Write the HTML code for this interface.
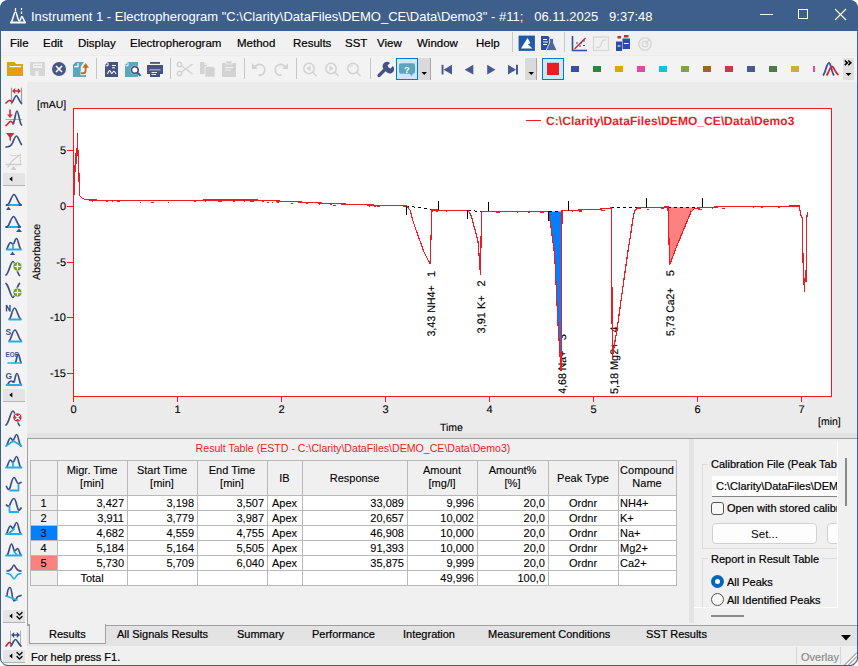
<!DOCTYPE html>
<html><head><meta charset="utf-8">
<style>
html,body{margin:0;padding:0;}
body{width:858px;height:666px;overflow:hidden;background:#ffffff;position:relative;font-family:"Liberation Sans",sans-serif;color:#000;}
.a{position:absolute;}
.menu span,.p12,.tab{-webkit-text-stroke:0.2px currentColor;}
.c{-webkit-text-stroke:0.1px currentColor;}
.win{position:absolute;left:0;top:0;width:858px;height:666px;border-radius:8px;background:#3e5f8c;overflow:hidden;}
.tt{position:absolute;left:31px;top:9px;font-size:13px;color:#fff;white-space:pre;line-height:16px;}
.menu{position:absolute;left:1px;top:31px;width:856px;height:24px;background:#f1f1f1;}
.menu span{position:absolute;top:5px;font-size:11.5px;line-height:14px;white-space:pre;}
.tb{position:absolute;left:1px;top:55px;width:856px;height:27px;background:#f3f3f3;border-top:1px solid #ececec;box-sizing:border-box;}
.sep{position:absolute;top:58px;width:1px;height:21px;background:#c8c8c8;}
.lt{position:absolute;left:1px;top:82px;width:26px;height:583px;background:#f3f3f3;}
.chart{position:absolute;left:27px;top:82px;width:830px;height:351px;background:#ebebeb;}
.split{position:absolute;left:27px;top:433px;width:830px;height:5px;background:#e3e3e3;}
.panel{position:absolute;left:27px;top:438px;width:830px;height:187px;background:#f0f0f0;border-top:1px solid #a0a0a0;box-sizing:border-box;border-left:1px solid #a0a0a0;}
.tabs{position:absolute;left:27px;top:625px;width:830px;height:21px;background:#e3e3e3;border-top:1px solid #a0a0a0;box-sizing:border-box;}
.status{position:absolute;left:27px;top:646px;width:830px;height:19px;background:#f0f0f0;}
.c{position:absolute;font-size:11px;line-height:13px;white-space:pre;}
.p12{font-size:11px;line-height:14px;white-space:pre;overflow:hidden;}
.tab{position:absolute;font-size:11px;line-height:14px;white-space:pre;}
</style></head><body>
<div class="win">
  <!-- title bar -->
  <svg class="a" style="left:9px;top:7px" width="18" height="18" viewBox="0 0 18 18">
    <g stroke="#fff" fill="none">
      <path d="M1,15.5 H17" stroke-width="1.8"/>
      <path d="M2.3,15 C4,13 5,5 6.5,5 C8,5 8.5,14 10.5,14 C11.5,14 12,9.5 13,9.5 C14,9.5 14.5,13.5 16,15" stroke-width="1.5"/>
      <path d="M6.5,1V4 M12.5,1V3 M12.5,4.5V7" stroke-width="1.3"/>
    </g>
  </svg>
  <div class="tt">Instrument 1 - Electropherogram "C:\Clarity\DataFiles\DEMO_CE\Data\Demo3" - #11;   06.11.2025   9:37:48</div>
  <div class="a" style="left:760px;top:14px;width:13px;height:1px;background:#fff"></div>
  <div class="a" style="left:798px;top:9px;width:8px;height:8px;border:1px solid #fff"></div>
  <svg class="a" style="left:834px;top:8px" width="13" height="13" viewBox="0 0 13 13"><path d="M1,1 L12,12 M12,1 L1,12" stroke="#fff" stroke-width="1.1"/></svg>

  <div class="menu">
    <span style="left:9px">File</span><span style="left:42px">Edit</span><span style="left:77px">Display</span><span style="left:129px">Electropherogram</span><span style="left:236px">Method</span><span style="left:292px">Results</span><span style="left:344px">SST</span><span style="left:376px">View</span><span style="left:416px">Window</span><span style="left:475px">Help</span>
    <svg class="a" style="left:-1px;top:-31px" width="858" height="54" viewBox="0 0 858 54">
      <rect x="512" y="32" width="1" height="20" fill="#c8c8c8"/>
      <rect x="518.6" y="35.6" width="16.3" height="15.3" fill="#1f5aa8"/>
      <path d="M521,48.5L527.5,38L530.5,43L528,44.5L532.5,48.5Z" fill="#fff"/>
      <path d="M541,36H548L551,39V50H541Z" fill="#2a4fa0"/>
      <path d="M543,39.5H547M543,42H548M543,44.5H547" stroke="#fff" stroke-width="1"/>
      <path d="M549.5,38.5H553.5V43L557,50.5H546L549.5,43Z" fill="#4d6b8a" stroke="#f0f0f0" stroke-width="0.8"/>
      <rect x="564" y="32" width="1" height="20" fill="#c8c8c8"/>
      <path d="M572.5,36V50.5H587" stroke="#2a4fa0" stroke-width="1.6" fill="none"/>
      <path d="M574.5,49L585.5,38" stroke="#d8262e" stroke-width="1.5"/>
      <path d="M576,43H578M580,43H582M583,41H585M579,46H581M583,45.5H585" stroke="#2a4fa0" stroke-width="1.1"/>
      <rect x="593.5" y="37" width="15" height="13.5" fill="none" stroke="#d8d8d8" stroke-width="1.3"/>
      <path d="M596,47.5H599C601,47.5 601.5,40 604,40H606" stroke="#d8d8d8" stroke-width="1.3" fill="none"/>
      <path d="M616,41.5H622V51H616Z M622.5,38.5H630V49H622.5Z" fill="#2a4fa0"/>
      <path d="M617.5,36H621V38.5H617.5Z M624,35H628.5V37.5H624Z" fill="#d8262e"/>
      <path d="M617.5,46H620.5M624,43.5H628.5" stroke="#fff" stroke-width="1.2"/>
      <circle cx="645" cy="44" r="6.2" fill="none" stroke="#d8d8d8" stroke-width="1.6"/>
      <circle cx="645" cy="44" r="2.8" fill="none" stroke="#d8d8d8" stroke-width="1.4"/>
      <path d="M645.5,43.5L650,39" stroke="#d8d8d8" stroke-width="1.4"/>
    </svg>
  </div>
  <div class="tb"></div>
  <svg class="a" style="left:0;top:54px" width="858" height="28" viewBox="0 54 858 28">
    <!-- folder -->
    <path d="M7,62H14.5L16,64H23V76H7Z" fill="#dea30c"/>
    <rect x="9.5" y="66" width="11.5" height="1.2" fill="#fff"/>
    <!-- save disabled -->
    <path d="M30,62H45V76H31.5L30,74.5Z" fill="#d6d6d6"/>
    <rect x="33" y="63.5" width="9" height="4.5" fill="#f0f0f0"/><rect x="34" y="65" width="7" height="1" fill="#d6d6d6"/>
    <rect x="35.5" y="71" width="3" height="5" fill="#f0f0f0"/>
    <!-- close circle -->
    <circle cx="59" cy="69" r="7" fill="#485888"/>
    <path d="M56,66L62,72M62,66L56,72" stroke="#fff" stroke-width="1.6"/>
    <!-- doc teal w/ arrow -->
    <path d="M76.5,62H84L80.8,66.5V71.5H86V77H73V65.5Z" fill="#5aa6c0"/>
    <path d="M73,65.5L76.5,62" stroke="#3d6a80" stroke-width="0.8"/>
    <path d="M74.3,66.6H78V63" stroke="#fff" stroke-width="1.1" fill="none"/>
    <path d="M80.5,73.2H83.3Q85.6,73.2 85.6,70.5V66.5" stroke="#fff" stroke-width="4" fill="none"/>
    <path d="M80.8,73.2H83.3Q85.6,73.2 85.6,70.5V66.5" stroke="#b8731c" stroke-width="2" fill="none"/>
    <path d="M82.3,67.8H89L85.65,63Z" fill="#b8731c"/>
    <rect x="96" y="58" width="1" height="21" fill="#c6c6c6"/>
    <!-- doc chart -->
    <path d="M108,62H118V77H105V65Z" fill="#465282"/>
    <path d="M108,62.8V65.8H105.5" stroke="#fff" stroke-width="1" fill="none"/>
    <path d="M112,65.5H116M112,67.8H115" stroke="#fff" stroke-width="1"/>
    <path d="M107.5,74C108.5,71 109.5,69.5 110.5,71.5C111.5,74 112,74 113,72C114,70.5 115,72 116,74" stroke="#fff" stroke-width="1.1" fill="none"/>
    <!-- doc magnifier -->
    <path d="M128,62H138V77H125V65Z" fill="#5aa6bc"/>
    <path d="M128,62.8V65.8H125.5" stroke="#fff" stroke-width="1" fill="none"/>
    <circle cx="134.8" cy="70" r="4.6" fill="#f0f0f0"/>
    <circle cx="134.8" cy="70" r="3.4" fill="#fff" stroke="#465282" stroke-width="1.8"/>
    <path d="M137.5,72.8L140.5,75.8" stroke="#465282" stroke-width="2"/>
    <!-- printer -->
    <rect x="150" y="62" width="10" height="1.8" fill="#465282"/>
    <rect x="147" y="65" width="16" height="9" fill="#465282"/>
    <rect x="149.5" y="69.5" width="11" height="1" fill="#f0f0f0"/>
    <rect x="150" y="70.5" width="10" height="6.5" fill="#465282"/>
    <path d="M151.5,72.5H157M151.5,74.5H156" stroke="#fff" stroke-width="0.9"/>
    <rect x="170" y="58" width="1" height="21" fill="#c6c6c6"/>
    <!-- scissors -->
    <g stroke="#d3d3d3" stroke-width="1.5" fill="none">
      <circle cx="179.5" cy="64.5" r="2.2"/><circle cx="179.5" cy="73.5" r="2.2"/>
      <path d="M181.5,66L192.5,74M181.5,72L192.5,64"/>
    </g>
    <!-- copy -->
    <path d="M200,62H204.5L207,64.5V74H200Z" fill="#d3d3d3"/>
    <path d="M204.5,62V64.5H207" stroke="#f0f0f0" stroke-width="0.8" fill="none"/>
    <path d="M205,66.5H213L215,68.5V77H205Z" fill="#d3d3d3" stroke="#f0f0f0" stroke-width="0.8"/>
    <!-- paste -->
    <rect x="222" y="63" width="14" height="14" fill="#d3d3d3"/>
    <rect x="226" y="61" width="6" height="3" fill="#d3d3d3" stroke="#f0f0f0" stroke-width="0.8"/>
    <path d="M225,67.5H233M225,70H231" stroke="#f0f0f0" stroke-width="1"/>
    <rect x="244" y="58" width="1" height="21" fill="#c6c6c6"/>
    <!-- undo/redo -->
    <path d="M255,67A5.3,5.3 0 1 1 258.5,75" stroke="#d3d3d3" stroke-width="1.8" fill="none"/>
    <path d="M252,63V69H258Z" fill="#d3d3d3"/>
    <path d="M285,67A5.3,5.3 0 1 0 281.5,75" stroke="#d3d3d3" stroke-width="1.8" fill="none"/>
    <path d="M288,63V69H282Z" fill="#d3d3d3"/>
    <rect x="296" y="58" width="1" height="21" fill="#c6c6c6"/>
    <!-- zoom icons -->
    <g stroke="#d3d3d3" stroke-width="1.6" fill="none">
      <circle cx="309" cy="68.5" r="5.2"/><path d="M312.8,72.3L316.5,76"/>
      <circle cx="331" cy="68.5" r="5.2"/><path d="M334.8,72.3L338.5,76"/>
      <circle cx="353" cy="68.5" r="5.2"/><path d="M356.8,72.3L360.5,76"/>
      <path d="M350.5,67A3,3 0 0 1 353,65" stroke-width="1"/>
    </g>
    <path d="M310.5,65.5V71.5L306.5,68.5Z" fill="#d3d3d3"/>
    <path d="M329.5,65.5V71.5L333.5,68.5Z" fill="#d3d3d3"/>
    <rect x="370" y="58" width="1" height="21" fill="#c6c6c6"/>
    <!-- wrench -->
    <path d="M379,75.5L385.5,69" stroke="#465282" stroke-width="3.2" stroke-linecap="round"/>
    <path d="M384,69.5A4.3,4.3 0 0 1 390,63L387.5,65.5L388.5,67.5L390.5,68.5L393,66A4.3,4.3 0 0 1 386.5,72Z" fill="#465282"/>
    <!-- help button -->
    <rect x="396.5" y="58.5" width="21" height="21" fill="#cce8ff" stroke="#0078d4" stroke-width="1"/>
    <path d="M401,63.2H413A2,2 0 0 1 415,65.2V71.7A2,2 0 0 1 413,73.7H412.5L412,76.6L409.5,73.7H401A2,2 0 0 1 399,71.7V65.2A2,2 0 0 1 401,63.2Z" fill="#5aa6bc"/>
    <text x="407" y="72.5" font-size="9.5" font-weight="bold" fill="#fff" text-anchor="middle" font-family="Liberation Sans">?</text>
    <rect x="418" y="58" width="13" height="22" fill="#dadada"/>
    <rect x="430" y="58" width="1" height="22" fill="#a8a8a8"/>
    <path d="M421.5,72H427L424.25,75Z" fill="#000"/>
    <!-- nav -->
    <g fill="#4a5a8e">
      <rect x="441.6" y="64.8" width="1.9" height="9.7"/><path d="M452,64.8V74.5L443.5,69.65Z"/>
      <path d="M473.3,64.8V74.5L464.6,69.65Z"/>
      <path d="M487.2,64.8V74.5L495.5,69.65Z"/>
      <path d="M508,64.8V74.5L516,69.65Z"/><rect x="516" y="64.8" width="2" height="9.7"/>
    </g>
    <rect x="525" y="58" width="12" height="22" fill="#dadada"/>
    <rect x="536" y="58" width="1" height="22" fill="#a8a8a8"/>
    <path d="M528.5,72H534L531.25,75Z" fill="#000"/>
    <!-- red button -->
    <rect x="542.5" y="58.5" width="21" height="21" fill="#cce8ff" stroke="#0078d4" stroke-width="1"/>
    <rect x="547" y="62.8" width="12" height="12.2" fill="#ed1c24"/>
    <rect x="571" y="66" width="8" height="6" fill="#3b4ea3"/><rect x="593" y="66" width="8" height="6" fill="#238a3a"/><rect x="615" y="66" width="8" height="6" fill="#e0a30e"/><rect x="637" y="66" width="8" height="6" fill="#e64a9f"/><rect x="659" y="66" width="8" height="6" fill="#18bdea"/><rect x="681" y="66" width="8" height="6" fill="#87a13a"/><rect x="703" y="66" width="8" height="6" fill="#a5661c"/><rect x="725" y="66" width="8" height="6" fill="#c23c46"/><rect x="747" y="66" width="8" height="6" fill="#4a5a8c"/><rect x="769" y="66" width="8" height="6" fill="#4e7a43"/><rect x="791" y="66" width="8" height="6" fill="#cfae3e"/>
    <rect x="813" y="66" width="2" height="6" fill="#e64a9f"/>
    <!-- overlay icon -->
    <path d="M823,75.5C825.5,73.5 826.5,63 829,63C831,63 831.5,72.5 834,75.5" stroke="#3b4ea3" stroke-width="1.8" fill="none"/>
    <path d="M826.5,75.5C828.5,73.5 830,66.5 832,66.5C834,66.5 835,73 838.5,75" stroke="#d8262e" stroke-width="1.8" fill="none"/>
    <!-- chevrons -->
    <rect x="843" y="58" width="11" height="22" fill="#e0e0e0"/>
    <path d="M844.8,60.5L847.3,62.8L844.8,65.1M848.3,60.5L850.8,62.8L848.3,65.1" stroke="#000" stroke-width="1.6" fill="none"/>
    <path d="M845.5,73H851.5L848.5,76Z" fill="#000"/>
  </svg>

  <div class="lt"></div>
  <svg class="a" style="left:0;top:82px" width="27" height="583" viewBox="0 82 27 583" fill="none" stroke-width="1.7" stroke-linecap="round" stroke-linejoin="round">
    <!-- 1 peak width -->
    <path d="M11.5,88V104M21.5,88V104" stroke="#98a0a0" stroke-width="1.2"/>
    <path d="M14,91H19" stroke="#c8303a" stroke-width="1.6"/>
    <path d="M15.2,88L12,91L15.2,94Z M17.8,88L21,91L17.8,94Z" fill="#c8303a" stroke="none"/>
    <path d="M12,102.5C14,100 15,95.5 16.3,95.5C17.6,95.5 19,101 21.5,103.5" stroke="#3d4f8a"/>
    <path d="M6,103C7.5,101.5 9,100 10,100.5C11,101 11.5,101.5 12.5,101.5" stroke="#c8303a"/>
    <!-- 2 -->
    <path d="M10,110V116" stroke="#c8303a" stroke-width="1.6"/><path d="M7,114.5H13L10,118Z" fill="#c8303a" stroke="none"/>
    <path d="M6,119.5H22" stroke="#a8b0b0" stroke-width="1"/>
    <path d="M13,124C15,121 15.5,111 17,111C18.5,111 19.5,123 21.5,125" stroke="#3d4f8a"/>
    <path d="M6,125.5C8,124 9.5,121 11,121.5C12,122 12.5,123 13.5,123" stroke="#c8303a"/>
    <!-- 3 funnel -->
    <path d="M6,133H14.5L11,137.5V141.5L9.5,140V137.5Z" fill="#c8303a" stroke="none"/>
    <path d="M6,147C9,147 11,146.5 12.5,143C14,139 15,136 16.5,136C18,136 19.5,142 21.5,144.5" stroke="#3d4f8a"/>
    <!-- 4 disabled -->
    <path d="M6,164.5H21M8,167C10,163 14,158.5 19.5,155.5" stroke="#cdcdcd" stroke-width="1.4"/>
    <path d="M20.5,154V164M11,155.5H20" stroke="#cdcdcd" stroke-width="1.2" stroke-dasharray="1.5,1.5"/>
    <path d="M10.5,170H16.5L13.5,166Z" fill="#cdcdcd" stroke="none"/>
    <rect x="3" y="173" width="22" height="12.5" fill="#e4e4e4"/><rect x="3" y="185" width="22" height="1" fill="#b4b4b4"/><path d="M12.3,176.5V181.5L9.3,179Z" fill="#000"/>
    <!-- 6 -->
    <path d="M8,204.5C10,203 12,194.5 14,194.5C16,194.5 18,203 20.5,204.5" stroke="#3d4f8a"/>
    <path d="M8,205H21" stroke="#27aee0" stroke-width="1.8"/><path d="M6.5,205H8M19.5,205H21" stroke="#3d4f8a" stroke-width="1.8"/>
    <path d="M6,210H11L8.5,206.5Z" fill="#3d4f8a" stroke="none"/>
    <!-- 7 -->
    <path d="M7.5,226.5C9.5,225 11.5,216.5 13.5,216.5C15.5,216.5 17.5,225 20,226.5" stroke="#3d4f8a"/>
    <path d="M7,227H20" stroke="#27aee0" stroke-width="1.8"/><path d="M6,227H7.5M18.5,227H20" stroke="#3d4f8a" stroke-width="1.8"/>
    <path d="M16,232H22L19,228.5Z" fill="#3d4f8a" stroke="none"/>
    <!-- 8 -->
    <path d="M7,249C8,246 9,243 10.5,242.5C11.5,242.5 12.5,244.5 13.5,244C14.5,243 15,238.5 16.5,238.5C18,238.5 19,247 20.5,249" stroke="#3d4f8a"/>
    <path d="M6.5,249.5H21M13,244.5V249" stroke="#27aee0" stroke-width="1.8"/>
    <path d="M10,255H15L12.5,251.5Z" fill="#3d4f8a" stroke="none"/>
    <!-- 9 -->
    <path d="M6,275C9,273 10.5,261.5 13,261.5C15,261.5 17,273 19.5,275.5" stroke="#3d4f8a"/>
    <circle cx="17.5" cy="266.5" r="4.5" fill="#6a9a1f" stroke="#f3f3f3" stroke-width="0.8"/>
    <path d="M15,266.5H20M17.5,264V269" stroke="#fff" stroke-width="1.3"/>
    <!-- 10 -->
    <path d="M6,283.5C9,285.5 10.5,297.5 13,297.5C15,297.5 17,285.5 19.5,283.5" stroke="#3d4f8a"/>
    <circle cx="17.5" cy="292.5" r="4.5" fill="#6a9a1f" stroke="#f3f3f3" stroke-width="0.8"/>
    <path d="M15,292.5H20M17.5,290V295" stroke="#fff" stroke-width="1.3"/>
    <!-- 11 N -->
    <path d="M6.5,311.5V305L10,311.5V305" stroke="#3d4f8a" stroke-width="1.4" stroke-linecap="butt" stroke-linejoin="miter"/>
    <path d="M9.5,319C11,318 12.5,308 14.5,308C16.5,308 18.5,318 20.5,319" stroke="#3d4f8a"/>
    <path d="M9,319.5H21" stroke="#27aee0" stroke-width="1.8"/>
    <!-- 12 S -->
    <text x="5.5" y="334.5" font-size="8.5" font-weight="bold" fill="#3d4f8a" stroke="none" font-family="Liberation Sans">S</text>
    <path d="M9.5,340.5C11,339.5 12.5,330 15,330C17,330 19,339.5 21,340.5" stroke="#3d4f8a"/>
    <path d="M9,341.5H21.5" stroke="#27aee0" stroke-width="1.8"/>
    <!-- 13 EOF -->
    <text x="5.5" y="356.5" font-size="7.5" font-weight="bold" fill="#3d4f8a" stroke="none" font-family="Liberation Sans" textLength="13" lengthAdjust="spacingAndGlyphs">EOF</text>
    <path d="M15.5,362.5C16.5,361 17,354 18.2,354C19.4,354 20,361 21,362.5" stroke="#3d4f8a"/>
    <path d="M8,363H21" stroke="#27aee0" stroke-width="1.6"/>
    <!-- 14 G -->
    <text x="5.5" y="378.5" font-size="8.5" font-weight="bold" fill="#3d4f8a" stroke="none" font-family="Liberation Sans">G</text>
    <path d="M8,384C9,382 10,381 11,381C12,381 13,382.5 14,382C15,380 15.5,373.5 17,373.5C18.5,373.5 19.5,383 21,384.5" stroke="#3d4f8a"/>
    <path d="M6.5,385H21.5" stroke="#27aee0" stroke-width="1.8"/>
    <rect x="3" y="389" width="22" height="12.5" fill="#e4e4e4"/><rect x="3" y="401" width="22" height="1" fill="#b4b4b4"/><path d="M12.3,392.5V397.5L9.3,395Z" fill="#000"/>
    <!-- 16 red x -->
    <path d="M6,425C9,423 10.5,411 13,411C15,411 17,423 19.5,425.5" stroke="#3d4f8a"/>
    <circle cx="17.5" cy="417.5" r="4.6" fill="#c8303a" stroke="#f3f3f3" stroke-width="0.8"/>
    <path d="M15.5,415.5L19.5,419.5M19.5,415.5L15.5,419.5" stroke="#fff" stroke-width="1.3"/>
    <!-- 17 -->
    <path d="M7,445C8.5,441 9,438 10.5,438C11.5,438 12,440.5 13,440.5C14.5,440 15,434.5 16.5,434.5C18.5,434.5 19,445 21,446" stroke="#3d4f8a"/>
    <path d="M6,446L13.5,441L21.5,446" stroke="#27aee0" stroke-width="1.8"/>
    <!-- 18 -->
    <path d="M7,467C8.5,463 9,460 10.5,460C11.5,460 12,462.5 13,462.5C14.5,462 15,456.5 16.5,456.5C18.5,456.5 19,467 21,467.5" stroke="#3d4f8a"/>
    <path d="M6,467.5H21.5M13,462.5V467" stroke="#27aee0" stroke-width="1.8"/>
    <!-- 19 -->
    <path d="M6.5,486.5C7.5,489 8.5,490 9.5,489C11,486 12,477.5 14,477.5C16,477.5 16.5,483.5 18,483.5C19,483.5 20,483 21,482.5" stroke="#3d4f8a"/>
    <path d="M9.5,490.5H18.5V484" stroke="#27aee0" stroke-width="1.8" stroke-linecap="butt"/>
    <!-- 20 -->
    <path d="M6.5,505C7.5,506.5 8.5,506.5 9.5,505.5C11,502 12,498.5 14,498.5C16,498.5 17,508.5 18.5,510C19.5,510.5 20.5,509 21,508" stroke="#3d4f8a"/>
    <path d="M9.5,505.5V512H19" stroke="#27aee0" stroke-width="1.8" stroke-linecap="butt"/>
    <!-- 21 -->
    <path d="M7,533C8.5,529 9,526 10.5,526C11.5,526 12,528.5 13,528.5C14.5,528 15,522.5 16.5,522.5C18.5,522.5 19,533 21,533.5" stroke="#3d4f8a"/>
    <path d="M6,534H21.5M9.5,533L14,529" stroke="#27aee0" stroke-width="1.8"/>
    <!-- 22 -->
    <path d="M7.5,555C9,552 10,544 11.5,544C13,544 13.5,551 14.5,551C15.5,551 16.5,548.5 17.5,548.5C19,548.5 19.5,554 21,555" stroke="#3d4f8a"/>
    <path d="M6,555.5H21.5M14,551.5L17,555" stroke="#27aee0" stroke-width="1.8"/>
    <!-- 23 -->
    <path d="M7,571C9,571 10.5,570.5 12,568C13,566 13.5,565 14,565C14.5,565 15,566 16,568C17.5,570.5 19,571 21,571" stroke="#3d4f8a" stroke-width="1.6"/>
    <path d="M7,573.5C9,573.5 10.5,574 12,576.5C13,578 13.5,579 14,579C14.5,579 15,578 16,576.5C17.5,574 19,573.5 21,573.5" stroke="#27aee0" stroke-width="1.6"/>
    <!-- 24 -->
    <path d="M7,596C7.5,590 8.5,587.5 10,587.5C12,587.5 12,601 14,601C16,601 16.5,597 18,596.5C19,596 20,596 21,595.5" stroke="#3d4f8a"/>
    <path d="M6,596L17,600" stroke="#27aee0" stroke-width="1.8"/>
    <rect x="3" y="610" width="22" height="12.5" fill="#e4e4e4"/><rect x="3" y="622" width="22" height="1" fill="#b4b4b4"/><path d="M12.3,613.5V618.5L9.3,616Z" fill="#000"/><path d="M17,612.5L19.5,615L22,612.5M17,616.5L19.5,619L22,616.5" stroke="#000" stroke-width="1.3" fill="none"/>
    <!-- 26 -->
    <path d="M10.5,631V646M20.5,631V646" stroke="#a8b0b0" stroke-width="1"/>
    <path d="M13,635H18" stroke="#3d4f8a" stroke-width="1.6"/>
    <path d="M14.2,632L11,635L14.2,638Z M16.8,632L20,635L16.8,638Z" fill="#3d4f8a" stroke="none"/>
    <path d="M11,646C13,643 14,639.5 15.5,639.5C17,639.5 18.5,644 21,646" stroke="#3d4f8a"/>
    <path d="M6,646C7.5,644.5 8.5,642 9.5,642.5C10.5,643 10.5,644 11.5,644" stroke="#c8303a"/>
    <rect x="3" y="650" width="22" height="12.5" fill="#e4e4e4"/><rect x="3" y="662" width="22" height="1" fill="#b4b4b4"/><path d="M12.3,653.5V658.5L9.3,656Z" fill="#000"/><path d="M17,652.5L19.5,655L22,652.5M17,656.5L19.5,659L22,656.5" stroke="#000" stroke-width="1.3" fill="none"/>
  </svg>
  <div class="chart"></div>
  <svg class="a" style="left:27px;top:82px" width="830" height="351" viewBox="27 82 830 351" font-family="Liberation Sans" font-size="11" text-rendering="geometricPrecision">
    <rect x="73.5" y="108.5" width="758" height="288" fill="#fff" stroke="#ed1c24" stroke-width="1"/>
    <g stroke="#ed1c24" stroke-width="1">
      <path d="M67,150.5H73 M67,206.5H73 M67,262.5H73 M67,317.5H73 M67,373.5H73"/>
      <path d="M73.5,397V402 M177.5,397V402 M281.5,397V402 M385.5,397V402 M489.5,397V402 M593.5,397V402 M697.5,397V402 M801.5,397V402"/>
      <path d="M526,120.5H541"/>
    </g>
    <g fill="#000" text-anchor="end" stroke="#000" stroke-width="0.12">
      <text x="66" y="154">5</text><text x="66" y="210">0</text><text x="66" y="266">-5</text><text x="66" y="321">-10</text><text x="66" y="377">-15</text>
    </g>
    <g fill="#000" text-anchor="middle" stroke="#000" stroke-width="0.12">
      <text x="73.5" y="413">0</text><text x="177.5" y="413">1</text><text x="281.5" y="413">2</text><text x="385.5" y="413">3</text><text x="489.5" y="413">4</text><text x="593.5" y="413">5</text><text x="697.5" y="413">6</text><text x="801.5" y="413">7</text>
    </g>
    <text x="37" y="108" font-size="10.5" stroke="#000" stroke-width="0.12">[mAU]</text>
    <text x="440" y="431" font-size="10.5" stroke="#000" stroke-width="0.12">Time</text>
    <text x="818" y="425" font-size="10.5" stroke="#000" stroke-width="0.12">[min]</text>
    <text transform="translate(39.5,252) rotate(-90)" text-anchor="middle" font-size="10.5" stroke="#000" stroke-width="0.12">Absorbance</text>
    <text x="546" y="125" font-size="12" font-weight="bold" fill="#ed1c24" letter-spacing="0.08">C:\Clarity\DataFiles\DEMO_CE\Data\Demo3</text>
    <!-- peak labels -->
    <g fill="#000" font-size="11" stroke="#000" stroke-width="0.15">
      <g transform="translate(434.5,336.6) rotate(-90)"><text x="0" y="0" textLength="51.4" lengthAdjust="spacingAndGlyphs">3,43 NH4+</text><text x="65.8" y="0" text-anchor="end">1</text></g>
      <g transform="translate(484.5,333.4) rotate(-90)"><text x="0" y="0" textLength="38" lengthAdjust="spacingAndGlyphs">3,91 K+</text><text x="53.1" y="0" text-anchor="end">2</text></g>
      <g transform="translate(566,393.7) rotate(-90)"><text x="0" y="0" textLength="43" lengthAdjust="spacingAndGlyphs">4,68 Na+</text><text x="59.6" y="0" text-anchor="end">3</text></g>
      <g transform="translate(618,394) rotate(-90)"><text x="0" y="0" textLength="51.5" lengthAdjust="spacingAndGlyphs">5,18 Mg2+</text><text x="67.7" y="0" text-anchor="end">4</text></g>
      <g transform="translate(673.5,336) rotate(-90)"><text x="0" y="0" textLength="48.3" lengthAdjust="spacingAndGlyphs">5,73 Ca2+</text><text x="65.9" y="0" text-anchor="end">5</text></g>
    </g>
    <!-- filled peaks -->
    <path d="M548.5,211.5 L551,227 L552.6,240 L554,249 L555,262 L558,324 L560,355 L561,371 L562,211.5 Z" fill="#0080ff"/>
    <path d="M668,207 L669.7,264.7 L677,245.5 L683,231 L687,221.4 L691,211.8 L695,207.5 Z" fill="#ff8080"/>
    <!-- baselines dashed -->
    <g stroke="#000" stroke-width="1" stroke-dasharray="3,3" shape-rendering="crispEdges" fill="none">
      <path d="M406.5,206 L432,209.5"/>
      <path d="M468,210.5 L481.5,211.5"/>
      <path d="M548.5,211.5 L562,211.5"/>
      <path d="M611,207.5 L638,207.5"/>
      <path d="M668,207 L696,207"/>
    </g>
    <!-- trace -->
    <path fill="none" stroke="#ed1c24" stroke-width="1.2" shape-rendering="crispEdges" d="M74,195 L74.5,193 L75,167 L76,153 L76.5,164 L77,153 L77.5,133 L78,153 L78.5,164 L79,175 L79.3,193.5 L80,196 L82,198 L85,199.5 L90,200 L120,200.5 L160,200.8 L210,200 L256,200 L300,202 L330,203.5 L370,205 L406.5,206 L410,210 L413,221 L416,230 L420,241 L424,252 L430,264 L431,238 L432,210 L468,210.5 L471,215 L474,226 L478,241 L480.5,274.7 L481.5,211.5 L548.5,211.3 L551,227 L552.6,240 L554,249 L555,262 L558,324 L560,355 L561,371 L562,211 L565,210.7 L600,209.1 L610.8,208 L611.5,208 L612.3,359.5 L613,353 L615,341 L617,330 L618.6,318 L627.4,255 L631.5,229 L632.8,219 L634.6,211 L637.8,208 L667.3,207 L668,207 L669.7,264.7 L677,245.5 L683,231 L687,221.4 L691,211.8 L695,208.2 L720,206.8 L799.2,206 L800,210 L801,216 L802.5,218 L803,260 L804.4,291.7 L805.5,270 L806.5,281.6 L806.8,218 L807.5,212.4"/>
    <path fill="#ed1c24" shape-rendering="crispEdges" d="M92,201h1v1h-1ZM106,201h2v1h-2ZM112,201h1v1h-1ZM117,201h3v1h-3ZM140,202h1v1h-1ZM151,202h3v1h-3ZM168,202h1v1h-1ZM194,201h2v1h-2ZM205,201h1v1h-1ZM218,201h4v1h-4ZM233,201h2v1h-2ZM244,201h1v1h-1ZM250,201h4v1h-4ZM262,201h2v1h-2ZM267,202h2v1h-2ZM272,202h1v1h-1ZM277,202h2v1h-2ZM291,203h2v1h-2ZM306,203h2v1h-2ZM319,204h1v1h-1ZM330,204h2v1h-2ZM333,205h3v1h-3ZM369,206h1v1h-1ZM374,206h2v1h-2ZM377,206h3v1h-3ZM436,211h2v1h-2ZM446,211h1v1h-1ZM496,212h4v1h-4ZM517,212h1v1h-1ZM528,212h2v1h-2ZM540,212h4v1h-4ZM572,211h1v1h-1ZM579,211h3v1h-3ZM601,210h4v1h-4ZM647,209h2v1h-2ZM661,208h3v1h-3ZM698,209h4v1h-4ZM712,208h1v1h-1ZM722,208h3v1h-3ZM753,207h1v1h-1ZM761,207h2v1h-2ZM778,207h2v1h-2Z"/>
    <!-- peak ticks -->
    <g stroke="#000" stroke-width="1">
      <path d="M406.5,206V215 M438.5,201V210 M467.5,210V219 M488.5,202V211 M548.5,211V221 M568.5,201V211 M646.5,198V208 M702.5,198V207"/>
    </g>

  </svg>
  <div class="split"></div>
  <div class="panel"></div>
  <div class="a" style="left:22px;top:441px;width:662px;height:14px;font-size:10.6px;line-height:14px;color:#ed1c24;text-align:center;white-space:pre">Result Table (ESTD - C:\Clarity\DataFiles\DEMO_CE\Data\Demo3)</div>
  <div class="a" style="left:30px;top:460px;width:646px;height:35px;background:#f0f0f0"></div>
  <div class="a" style="left:30px;top:495px;width:27px;height:90px;background:#f0f0f0"></div>
  <div class="a" style="left:57px;top:495px;width:619px;height:90px;background:#fff"></div>
  <div class="a" style="left:30px;top:525px;width:27px;height:15px;background:#0080ff"></div>
  <div class="a" style="left:30px;top:555px;width:27px;height:15px;background:#ff8080"></div>
  <div class="a" style="left:30px;top:460px;width:1px;height:126px;background:#b9b9b9"></div>
  <div class="a" style="left:57px;top:460px;width:1px;height:126px;background:#b9b9b9"></div>
  <div class="a" style="left:127px;top:460px;width:1px;height:126px;background:#b9b9b9"></div>
  <div class="a" style="left:197px;top:460px;width:1px;height:126px;background:#b9b9b9"></div>
  <div class="a" style="left:267px;top:460px;width:1px;height:126px;background:#b9b9b9"></div>
  <div class="a" style="left:302px;top:460px;width:1px;height:126px;background:#b9b9b9"></div>
  <div class="a" style="left:407px;top:460px;width:1px;height:126px;background:#b9b9b9"></div>
  <div class="a" style="left:477px;top:460px;width:1px;height:126px;background:#b9b9b9"></div>
  <div class="a" style="left:548px;top:460px;width:1px;height:126px;background:#b9b9b9"></div>
  <div class="a" style="left:618px;top:460px;width:1px;height:126px;background:#b9b9b9"></div>
  <div class="a" style="left:676px;top:460px;width:1px;height:126px;background:#b9b9b9"></div>
  <div class="a" style="left:30px;top:460px;width:647px;height:1px;background:#b9b9b9"></div>
  <div class="a" style="left:30px;top:495px;width:647px;height:1px;background:#b9b9b9"></div>
  <div class="a" style="left:30px;top:510px;width:647px;height:1px;background:#b9b9b9"></div>
  <div class="a" style="left:30px;top:525px;width:647px;height:1px;background:#b9b9b9"></div>
  <div class="a" style="left:30px;top:540px;width:647px;height:1px;background:#b9b9b9"></div>
  <div class="a" style="left:30px;top:555px;width:647px;height:1px;background:#b9b9b9"></div>
  <div class="a" style="left:30px;top:570px;width:647px;height:1px;background:#b9b9b9"></div>
  <div class="a" style="left:30px;top:585px;width:647px;height:1px;background:#b9b9b9"></div>
  <div class="c" style="left:57px;top:464px;width:70px;text-align:center">Migr. Time<br>[min]</div>
  <div class="c" style="left:127px;top:464px;width:70px;text-align:center">Start Time<br>[min]</div>
  <div class="c" style="left:197px;top:464px;width:70px;text-align:center">End Time<br>[min]</div>
  <div class="c" style="left:267px;top:472px;width:35px;text-align:center">IB</div>
  <div class="c" style="left:302px;top:472px;width:105px;text-align:center">Response</div>
  <div class="c" style="left:407px;top:464px;width:70px;text-align:center">Amount<br>[mg/l]</div>
  <div class="c" style="left:477px;top:464px;width:71px;text-align:center">Amount%<br>[%]</div>
  <div class="c" style="left:548px;top:472px;width:70px;text-align:center">Peak Type</div>
  <div class="c" style="left:618px;top:464px;width:58px;text-align:center">Compound<br>Name</div>
  <div class="c" style="left:30px;top:497px;width:27px;box-sizing:border-box;text-align:center">1</div>
  <div class="c" style="left:57px;top:497px;width:70px;box-sizing:border-box;padding-right:3px;text-align:right">3,427</div>
  <div class="c" style="left:127px;top:497px;width:70px;box-sizing:border-box;padding-right:3px;text-align:right">3,198</div>
  <div class="c" style="left:197px;top:497px;width:70px;box-sizing:border-box;padding-right:3px;text-align:right">3,507</div>
  <div class="c" style="left:267px;top:497px;width:35px;box-sizing:border-box;padding-left:5px;text-align:left">Apex</div>
  <div class="c" style="left:302px;top:497px;width:105px;box-sizing:border-box;padding-right:3px;text-align:right">33,089</div>
  <div class="c" style="left:407px;top:497px;width:70px;box-sizing:border-box;padding-right:3px;text-align:right">9,996</div>
  <div class="c" style="left:477px;top:497px;width:71px;box-sizing:border-box;padding-right:3px;text-align:right">20,0</div>
  <div class="c" style="left:548px;top:497px;width:70px;box-sizing:border-box;text-align:center">Ordnr</div>
  <div class="c" style="left:618px;top:497px;width:58px;box-sizing:border-box;padding-left:2px;text-align:left">NH4+</div>
  <div class="c" style="left:30px;top:512px;width:27px;box-sizing:border-box;text-align:center">2</div>
  <div class="c" style="left:57px;top:512px;width:70px;box-sizing:border-box;padding-right:3px;text-align:right">3,911</div>
  <div class="c" style="left:127px;top:512px;width:70px;box-sizing:border-box;padding-right:3px;text-align:right">3,779</div>
  <div class="c" style="left:197px;top:512px;width:70px;box-sizing:border-box;padding-right:3px;text-align:right">3,987</div>
  <div class="c" style="left:267px;top:512px;width:35px;box-sizing:border-box;padding-left:5px;text-align:left">Apex</div>
  <div class="c" style="left:302px;top:512px;width:105px;box-sizing:border-box;padding-right:3px;text-align:right">20,657</div>
  <div class="c" style="left:407px;top:512px;width:70px;box-sizing:border-box;padding-right:3px;text-align:right">10,002</div>
  <div class="c" style="left:477px;top:512px;width:71px;box-sizing:border-box;padding-right:3px;text-align:right">20,0</div>
  <div class="c" style="left:548px;top:512px;width:70px;box-sizing:border-box;text-align:center">Ordnr</div>
  <div class="c" style="left:618px;top:512px;width:58px;box-sizing:border-box;padding-left:2px;text-align:left">K+</div>
  <div class="c" style="left:30px;top:527px;width:27px;box-sizing:border-box;text-align:center">3</div>
  <div class="c" style="left:57px;top:527px;width:70px;box-sizing:border-box;padding-right:3px;text-align:right">4,682</div>
  <div class="c" style="left:127px;top:527px;width:70px;box-sizing:border-box;padding-right:3px;text-align:right">4,559</div>
  <div class="c" style="left:197px;top:527px;width:70px;box-sizing:border-box;padding-right:3px;text-align:right">4,755</div>
  <div class="c" style="left:267px;top:527px;width:35px;box-sizing:border-box;padding-left:5px;text-align:left">Apex</div>
  <div class="c" style="left:302px;top:527px;width:105px;box-sizing:border-box;padding-right:3px;text-align:right">46,908</div>
  <div class="c" style="left:407px;top:527px;width:70px;box-sizing:border-box;padding-right:3px;text-align:right">10,000</div>
  <div class="c" style="left:477px;top:527px;width:71px;box-sizing:border-box;padding-right:3px;text-align:right">20,0</div>
  <div class="c" style="left:548px;top:527px;width:70px;box-sizing:border-box;text-align:center">Ordnr</div>
  <div class="c" style="left:618px;top:527px;width:58px;box-sizing:border-box;padding-left:2px;text-align:left">Na+</div>
  <div class="c" style="left:30px;top:542px;width:27px;box-sizing:border-box;text-align:center">4</div>
  <div class="c" style="left:57px;top:542px;width:70px;box-sizing:border-box;padding-right:3px;text-align:right">5,184</div>
  <div class="c" style="left:127px;top:542px;width:70px;box-sizing:border-box;padding-right:3px;text-align:right">5,164</div>
  <div class="c" style="left:197px;top:542px;width:70px;box-sizing:border-box;padding-right:3px;text-align:right">5,505</div>
  <div class="c" style="left:267px;top:542px;width:35px;box-sizing:border-box;padding-left:5px;text-align:left">Apex</div>
  <div class="c" style="left:302px;top:542px;width:105px;box-sizing:border-box;padding-right:3px;text-align:right">91,393</div>
  <div class="c" style="left:407px;top:542px;width:70px;box-sizing:border-box;padding-right:3px;text-align:right">10,000</div>
  <div class="c" style="left:477px;top:542px;width:71px;box-sizing:border-box;padding-right:3px;text-align:right">20,0</div>
  <div class="c" style="left:548px;top:542px;width:70px;box-sizing:border-box;text-align:center">Ordnr</div>
  <div class="c" style="left:618px;top:542px;width:58px;box-sizing:border-box;padding-left:2px;text-align:left">Mg2+</div>
  <div class="c" style="left:30px;top:557px;width:27px;box-sizing:border-box;text-align:center">5</div>
  <div class="c" style="left:57px;top:557px;width:70px;box-sizing:border-box;padding-right:3px;text-align:right">5,730</div>
  <div class="c" style="left:127px;top:557px;width:70px;box-sizing:border-box;padding-right:3px;text-align:right">5,709</div>
  <div class="c" style="left:197px;top:557px;width:70px;box-sizing:border-box;padding-right:3px;text-align:right">6,040</div>
  <div class="c" style="left:267px;top:557px;width:35px;box-sizing:border-box;padding-left:5px;text-align:left">Apex</div>
  <div class="c" style="left:302px;top:557px;width:105px;box-sizing:border-box;padding-right:3px;text-align:right">35,875</div>
  <div class="c" style="left:407px;top:557px;width:70px;box-sizing:border-box;padding-right:3px;text-align:right">9,999</div>
  <div class="c" style="left:477px;top:557px;width:71px;box-sizing:border-box;padding-right:3px;text-align:right">20,0</div>
  <div class="c" style="left:548px;top:557px;width:70px;box-sizing:border-box;text-align:center">Ordnr</div>
  <div class="c" style="left:618px;top:557px;width:58px;box-sizing:border-box;padding-left:2px;text-align:left">Ca2+</div>
  <div class="c" style="left:57px;top:572px;width:70px;box-sizing:border-box;text-align:center">Total</div>
  <div class="c" style="left:407px;top:572px;width:70px;box-sizing:border-box;padding-right:3px;text-align:right">49,996</div>
  <div class="c" style="left:477px;top:572px;width:71px;box-sizing:border-box;padding-right:3px;text-align:right">100,0</div>
  
  <!-- right panel -->
  <div class="a" style="left:677px;top:439px;width:12px;height:186px;background:#f0f0f0"></div>
  <div class="a" style="left:689px;top:439px;width:5px;height:184px;background:#e3e3e3"></div>
  <div class="a" style="left:694px;top:439px;width:143px;height:168px;background:#f0f0f0"></div>
  <div class="a" style="left:702px;top:464px;width:140px;height:85px;border:1px solid #dcdcdc;border-right:none;box-sizing:border-box"></div>
  <div class="a" style="left:702px;top:558px;width:140px;height:60px;border:1px solid #dcdcdc;border-right:none;border-bottom:none;box-sizing:border-box"></div>
  <div class="a p12" style="left:708px;top:457px;padding:0 3px;background:#f0f0f0">Calibration File (Peak Table</div>
  <div class="a" style="left:712px;top:476px;width:125px;height:21px;background:#fff;border-bottom:1px solid #868686;box-sizing:border-box"></div>
  <div class="a p12" style="left:716px;top:479px">C:\Clarity\DataFiles\DEMO_CE\Data\Demo3</div>
  <div class="a" style="left:711px;top:502px;width:13px;height:13px;border:1px solid #555;border-radius:3px;box-sizing:border-box;background:#f8f8f8"></div>
  <div class="a p12" style="left:727px;top:501px">Open with stored calibration</div>
  <div class="a" style="left:712px;top:523px;width:105px;height:21px;background:#fdfdfd;border:1px solid #d0d0d0;border-radius:4px;box-sizing:border-box;font-size:11.5px;line-height:21px;text-align:center">Set...</div>
  <div class="a" style="left:827px;top:523px;width:30px;height:21px;background:#fdfdfd;border:1px solid #d0d0d0;border-radius:4px;box-sizing:border-box"></div>
  <div class="a p12" style="left:708px;top:552px;padding:0 3px;background:#f0f0f0">Report in Result Table</div>
  <div class="a" style="left:711px;top:575px;width:13px;height:13px;border-radius:50%;background:#0067c0"></div>
  <div class="a" style="left:715px;top:579px;width:5px;height:5px;border-radius:50%;background:#fff"></div>
  <div class="a p12" style="left:727px;top:575px">All Peaks</div>
  <div class="a" style="left:711px;top:593px;width:13px;height:13px;border-radius:50%;border:1px solid #555;box-sizing:border-box;background:#f8f8f8"></div>
  <div class="a p12" style="left:727px;top:593px">All Identified Peaks</div>
  <div class="a" style="left:694px;top:607px;width:143px;height:16px;background:#f0f0f0"></div>
  <div class="a" style="left:711px;top:615px;width:33px;height:2px;background:#8a8a8a"></div>
  <div class="a" style="left:837px;top:439px;width:20px;height:186px;background:#f0f0f0"></div>
  <div class="a" style="left:845px;top:458px;width:2px;height:48px;background:#8a8a8a"></div>
  <div class="a" style="left:837px;top:441px;width:1px;height:167px;background:#fff"></div>
  <div class="a" style="left:694px;top:607px;width:144px;height:1px;background:#fff"></div>
  <div class="tabs"></div>
  <div class="a" style="left:29px;top:624px;width:77px;height:20px;background:#f0f0f0;border:1px solid #a0a0a0;border-top:none;box-sizing:border-box"></div>
  <div class="a" style="left:27px;top:624px;width:3px;height:1px;background:#a0a0a0"></div>
  <div class="tab" style="left:49px;top:627px">Results</div>
  <div class="tab" style="left:117px;top:627px">All Signals Results</div>
  <div class="tab" style="left:237px;top:627px">Summary</div>
  <div class="tab" style="left:312px;top:627px">Performance</div>
  <div class="tab" style="left:403px;top:627px">Integration</div>
  <div class="tab" style="left:488px;top:627px">Measurement Conditions</div>
  <div class="tab" style="left:646px;top:627px">SST Results</div>
  <svg class="a" style="left:841px;top:635px" width="10" height="6" viewBox="0 0 10 6"><path d="M0,0H10L5,5.5Z" fill="#000"/></svg>
  <div class="status"></div>
  <div class="tab" style="left:31px;top:650px">For help press F1.</div>
  <div class="a" style="left:796px;top:647px;width:1px;height:17px;background:#d6d6d6"></div>
  <div class="a" style="left:840px;top:647px;width:1px;height:17px;background:#d6d6d6"></div>
  <div class="tab" style="left:801px;top:650px;color:#8c8c8c">Overlay</div>
  <svg class="a" style="left:844px;top:652px" width="13" height="13" viewBox="0 0 13 13"><path d="M13,0.5L0.5,13M13,4.5L4.5,13M13,8.5L8.5,13" stroke="#6a6a6a" stroke-width="0.9"/><path d="M13,2L2,13M13,6L6,13M13,10L10,13" stroke="#ffffff" stroke-width="0.8"/></svg>

  <div class="a" style="left:0;top:0;width:858px;height:666px;box-sizing:border-box;border:1px solid #3e5f8c;border-radius:8px"></div>
</div>
</body></html>
